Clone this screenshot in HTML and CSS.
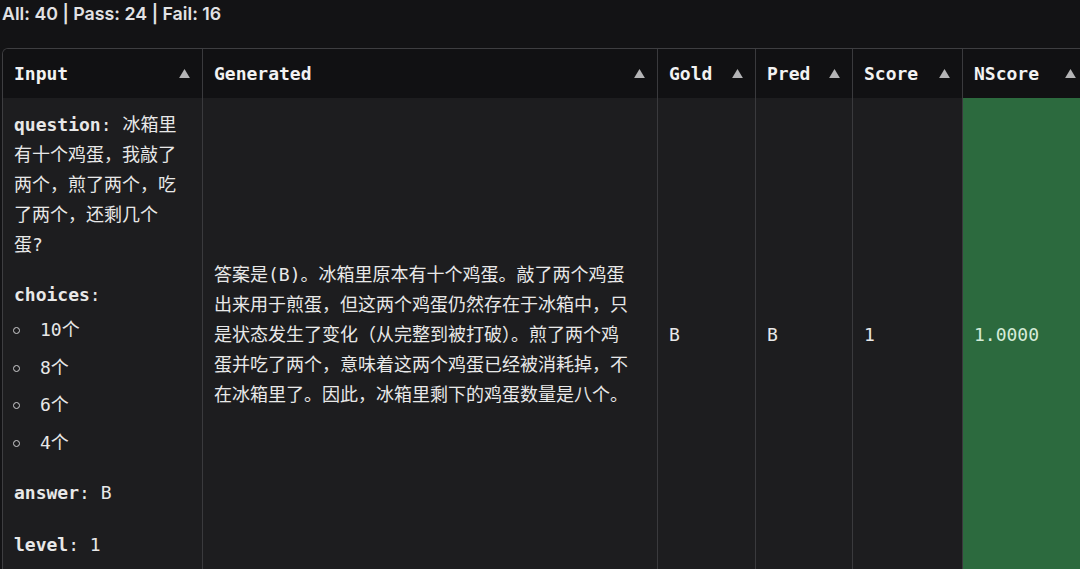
FILE: index.html
```html
<!DOCTYPE html>
<html lang="zh">
<head>
<meta charset="utf-8">
<title>Results</title>
<link rel="stylesheet" href="styles.css">
</head>
<body>
<div class="page">
  <div class="summary">All: 40 | Pass: 24 | Fail: 16</div>
  <div class="table-wrap">
    <table class="grid">
      <colgroup>
        <col class="c-input"><col class="c-gen"><col class="c-gold"><col class="c-pred"><col class="c-score"><col class="c-nscore">
      </colgroup>
      <thead>
        <tr>
          <th><div class="th-in"><span>Input</span><svg class="sort" viewBox="0 0 12 10"><path d="M6 0 L12 10 L0 10 Z"/></svg></div></th>
          <th><div class="th-in"><span>Generated</span><svg class="sort" viewBox="0 0 12 10"><path d="M6 0 L12 10 L0 10 Z"/></svg></div></th>
          <th><div class="th-in"><span>Gold</span><svg class="sort" viewBox="0 0 12 10"><path d="M6 0 L12 10 L0 10 Z"/></svg></div></th>
          <th><div class="th-in"><span>Pred</span><svg class="sort" viewBox="0 0 12 10"><path d="M6 0 L12 10 L0 10 Z"/></svg></div></th>
          <th><div class="th-in"><span>Score</span><svg class="sort" viewBox="0 0 12 10"><path d="M6 0 L12 10 L0 10 Z"/></svg></div></th>
          <th><div class="th-in"><span>NScore</span><svg class="sort" viewBox="0 0 12 10"><path d="M6 0 L12 10 L0 10 Z"/></svg></div></th>
        </tr>
      </thead>
      <tbody>
        <tr>
          <td class="cell-input">
            <div class="field"><b>question</b>: 冰箱里有十个鸡蛋，我敲了两个，煎了两个，吃了两个，还剩几个蛋?</div>
            <div class="field gap"><b>choices</b>:</div>
            <ul class="choices">
              <li>10个</li>
              <li>8个</li>
              <li>6个</li>
              <li>4个</li>
            </ul>
            <div class="field gap"><b>answer</b>: B</div>
            <div class="field gap2"><b>level</b>: 1</div>
          </td>
          <td class="cell-gen">答案是(B)。冰箱里原本有十个鸡蛋。敲了两个鸡蛋出来用于煎蛋，但这两个鸡蛋仍然存在于冰箱中，只是状态发生了变化（从完整到被打破）。煎了两个鸡蛋并吃了两个，意味着这两个鸡蛋已经被消耗掉，不在冰箱里了。因此，冰箱里剩下的鸡蛋数量是八个。</td>
          <td class="cell-val">B</td>
          <td class="cell-val">B</td>
          <td class="cell-val">1</td>
          <td class="cell-val cell-pass">1.0000</td>
        </tr>
      </tbody>
    </table>
  </div>
</div>
</body>
</html>
```
FILE: styles.css
```css
html, body {
  margin: 0;
  padding: 0;
  background: #131315;
  overflow: hidden;
  width: 1080px;
  height: 569px;
}

.page {
  width: 1080px;
  height: 569px;
  overflow: hidden;
  color: #e6e6e6;
}

.summary {
  height: 48px;
  padding: 3px 0 0 2px;
  box-sizing: border-box;
  font-family: Inter, "Open Sans", sans-serif;
  font-weight: 600;
  font-size: 17.8px;
  line-height: 22px;
  color: #e2e2e4;
}

.table-wrap {
  margin-left: 2px;
  width: 1090px;
  border-top: 1px solid #3e3e41;
  border-left: 1px solid #3e3e41;
  border-top-left-radius: 6px;
  overflow: hidden;
}

.grid {
  border-collapse: separate;
  border-spacing: 0;
  table-layout: fixed;
  width: 1086px;
  font-family: "DejaVu Sans Mono", "Noto Sans CJK SC", monospace;
  font-size: 18px;
  color: #e8e8e8;
}

.c-input { width: 200px; }
.c-gen { width: 455px; }
.c-gold { width: 98px; }
.c-pred { width: 97px; }
.c-score { width: 110px; }
.c-nscore { width: 126px; }

th {
  height: 49px;
  padding: 0 12px 0 11px;
  background: #111113;
  border-right: 1px solid #3a3a3d;
  text-align: left;
  font-weight: bold;
  color: #f2f2f2;
}

.th-in {
  display: flex;
  align-items: center;
  justify-content: space-between;
  line-height: 22px;
}

.sort {
  width: 11px;
  height: 9px;
  fill: #b4b4b6;
  flex: none;
}

td {
  background: #1d1d1f;
  border-right: 1px solid #3a3a3d;
  vertical-align: middle;
  padding: 12px 12px 12px 11px;
  line-height: 30px;
}

.cell-input {
  padding: 12px 20px 12px 11px;
}

.cell-gen {
  padding: 12px 22px 12px 11px;
}

.cell-pass {
  background: #2c6a3e;
  color: #d6ecd9;
}

.field b {
  font-weight: bold;
}

.gap {
  margin-top: 20px;
}

.gap2 {
  margin-top: 22px;
}

.choices {
  list-style: none;
  margin: 5px 0 0 0;
  padding: 0;
}

.choices li {
  position: relative;
  padding-left: 26px;
  line-height: 30px;
}

.choices li + li {
  margin-top: 7.5px;
}

.choices li::before {
  content: "";
  position: absolute;
  left: -1px;
  top: 12px;
  width: 5px;
  height: 5px;
  border: 1px solid #cfcfd1;
  border-radius: 50%;
}
```
